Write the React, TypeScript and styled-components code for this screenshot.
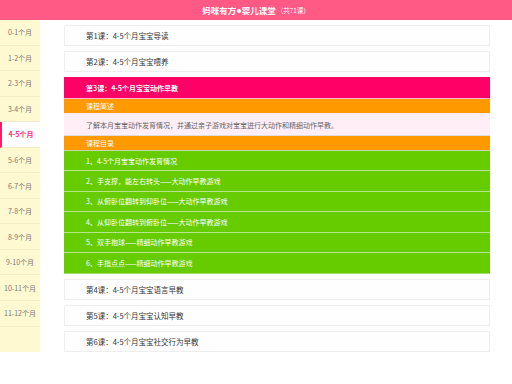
import React, { useState } from 'react';
import styled, { createGlobalStyle } from 'styled-components';

const GlobalStyle = createGlobalStyle`
  html, body {
    margin: 0;
    padding: 0;
    background: #fff;
  }
  body {
    font-family: "Noto Sans CJK SC", "Liberation Sans", sans-serif;
  }
`;

const Header = styled.div`
  height: 20px;
  background: #ff5a86;
  color: #fff;
  display: flex;
  align-items: center;
  justify-content: center;
  font-size: 8.5px;
  font-weight: bold;
`;

const Dot = styled.span`
  font-size: 4.5px;
  margin: 0 0.5px;
`;

const Small = styled.span`
  font-size: 6.5px;
  font-weight: normal;
  margin-left: 1px;
`;

const Body = styled.div`
  display: flex;
  align-items: stretch;
`;

const Sidebar = styled.div`
  width: 40px;
  flex-shrink: 0;
  background: #fff9d1;
`;

const MonthItem = styled.div<{ $active?: boolean }>`
  box-sizing: border-box;
  height: 25.55px;
  border-bottom: 1px solid #f4eec6;
  display: flex;
  align-items: center;
  justify-content: center;
  font-size: 7px;
  color: ${p => (p.$active ? '#ff2d6f' : '#777')};
  font-weight: ${p => (p.$active ? 'bold' : 'normal')};
  background: ${p => (p.$active ? '#fff' : 'transparent')};
  border-left: ${p => (p.$active ? '2px solid #ff1a66' : '0')};
  cursor: pointer;
`;

const Main = styled.div`
  flex: 1;
  padding: 5px 22px 0 24px;
  display: flex;
  flex-direction: column;
  gap: 5px;
`;

const LessonCard = styled.div`
  box-sizing: border-box;
  height: 21px;
  border: 1px solid #eeeeee;
  background: #fefefe;
  padding-left: 21px;
  display: flex;
  align-items: center;
  font-size: 7.5px;
  color: #333;
  cursor: pointer;
`;

const ActiveBlock = styled.div`
  display: flex;
  flex-direction: column;
  border-bottom: 1px solid #a6de6a;
`;

const Row = styled.div<{ $bg: string; $h: number; $line: string; $color?: string; $bold?: boolean }>`
  box-sizing: content-box;
  height: ${p => p.$h}px;
  background: ${p => p.$bg};
  border-bottom: 1px solid ${p => p.$line};
  padding-left: 22px;
  display: flex;
  align-items: center;
  font-size: 7px;
  color: ${p => p.$color || '#fff'};
  font-weight: ${p => (p.$bold ? 'bold' : 'normal')};
`;

const months = ['0-1个月', '1-2个月', '2-3个月', '3-4个月', '4-5个月', '5-6个月', '6-7个月', '7-8个月', '8-9个月', '9-10个月', '10-11个月', '11-12个月'];

const lessons = [
  '第1课：4-5个月宝宝导读',
  '第2课：4-5个月宝宝喂养',
  '第3课：4-5个月宝宝动作早教',
  '第4课：4-5个月宝宝语言早教',
  '第5课：4-5个月宝宝认知早教',
  '第6课：4-5个月宝宝社交行为早教',
];

const catalog = [
  '1、4-5个月宝宝动作发育情况',
  '2、手支撑，能左右转头——大动作早教游戏',
  '3、从俯卧位翻转到仰卧位——大动作早教游戏',
  '4、从仰卧位翻转到俯卧位——大动作早教游戏',
  '5、双手抱球——精细动作早教游戏',
  '6、手指点点——精细动作早教游戏',
];

function App() {
  const [month, setMonth] = useState(4);
  const [open, setOpen] = useState(2);

  return (
    <>
      <GlobalStyle />
      <Header>
        妈咪有方<Dot>●</Dot>婴儿课堂<Small>（共71课）</Small>
      </Header>
      <Body>
        <Sidebar>
          {months.map((m, i) => (
            <MonthItem key={m} $active={i === month} onClick={() => setMonth(i)}>
              {m}
            </MonthItem>
          ))}
        </Sidebar>
        <Main>
          {lessons.map((l, i) =>
            i === open ? (
              <ActiveBlock key={l}>
                <Row $bg="#ff0066" $h={21} $line="#ffb3cf" $bold>{l}</Row>
                <Row $bg="#ff9900" $h={14} $line="#f4e6ec">课程简述</Row>
                <Row $bg="#ffeef6" $h={21} $line="#dddddd" $color="#666">
                  了解本月宝宝动作发育情况，并通过亲子游戏对宝宝进行大动作和精细动作早教。
                </Row>
                <Row $bg="#ff9900" $h={14} $line="#c7d9a6">课程目录</Row>
                {catalog.map((c, j) => (
                  <Row key={c} $bg="#66cc00" $h={19.4} $line={j === catalog.length - 1 ? '#66cc00' : '#b8e58a'}>
                    {c}
                  </Row>
                ))}
              </ActiveBlock>
            ) : (
              <LessonCard key={l} onClick={() => setOpen(i)}>{l}</LessonCard>
            )
          )}
        </Main>
      </Body>
    </>
  );
}

export default App;
